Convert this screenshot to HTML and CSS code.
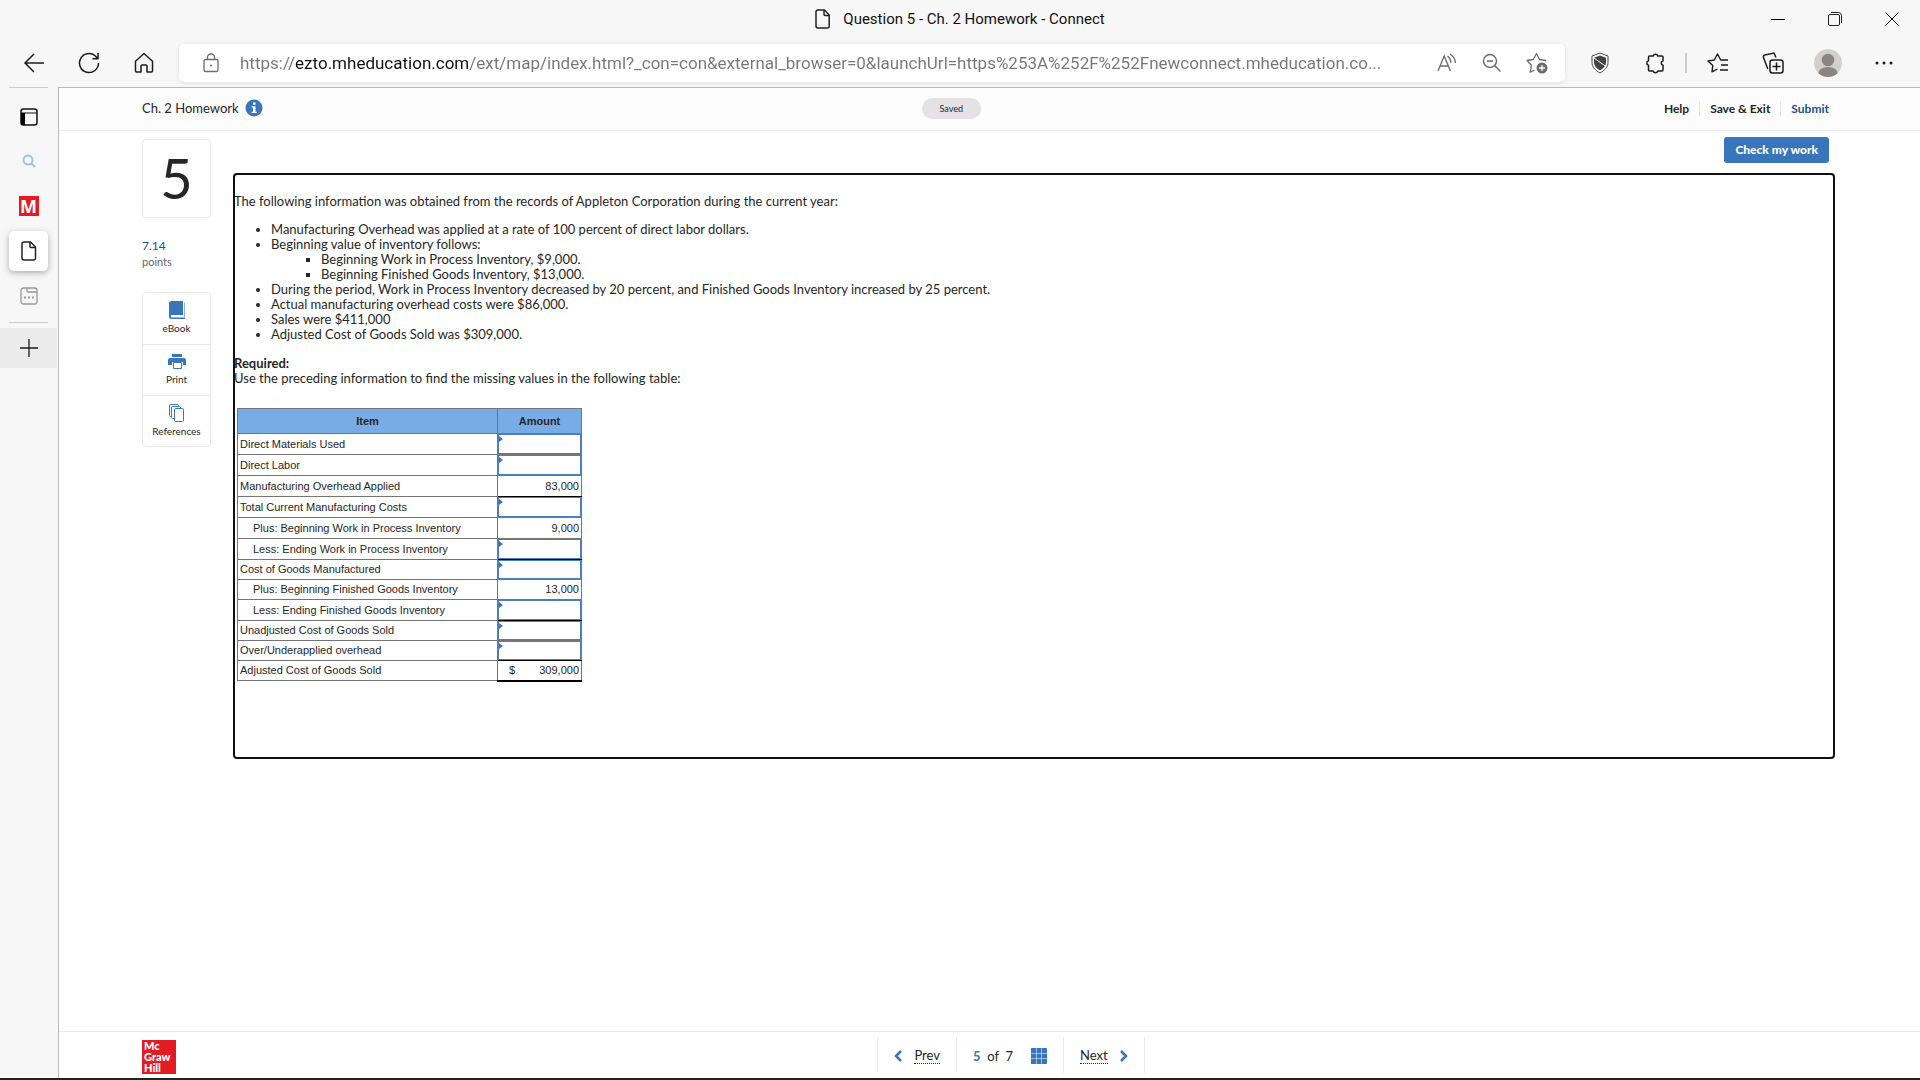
FILE: index.html
```html
<!DOCTYPE html>
<html lang="en">
<head>
<meta charset="utf-8">
<title>Question 5 - Ch. 2 Homework - Connect</title>
<link rel="stylesheet" href="styles.css">
</head>
<body>
<div class="browser">
  <header class="titlebar">
    <div class="window-title">
      <svg width="16" height="20" viewBox="0 0 16 20" fill="none" stroke="#222" stroke-width="1.5"><path d="M3 1h6.500l4.700 5v11a2 2 0 0 1-2 2H3a2 2 0 0 1-2-2V3a2 2 0 0 1 2-2z"/><path d="M9 1v4.500a1 1 0 0 0 1 1h4"/></svg>
      <span>Question 5 - Ch. 2 Homework - Connect</span>
    </div>
    <div class="window-controls">
      <button type="button" aria-label="Minimize"><svg width="14" height="14" stroke="#000"><path d="M0 7.500h14"/></svg></button>
      <button type="button" aria-label="Restore"><svg width="14" height="14" fill="none" stroke="#222"><rect x=".5" y="2.500" width="11" height="11" rx="1.500"/><path d="M3 .5h7.500a3 3 0 0 1 3 3V11"/></svg></button>
      <button type="button" aria-label="Close"><svg width="14" height="14" stroke="#000"><path d="M.5.5l13 13M13.500.5l-13 13"/></svg></button>
    </div>
  </header>

  <div class="toolbar">
    <button type="button" class="tool" aria-label="Back"><svg width="22" height="20" fill="none" stroke="#1b1b1b" stroke-width="1.500"><path d="M21 10H2M11 1L2 10l9 9"/></svg></button>
    <button type="button" class="tool" aria-label="Refresh"><svg width="22" height="22" fill="none" stroke="#1b1b1b" stroke-width="1.500"><path d="M20.500 11a9.500 9.500 0 1 1-3.400-7.200l2.600 2.700M20 1v5.700h-5.500"/></svg></button>
    <button type="button" class="tool" aria-label="Home"><svg width="20" height="22" fill="none" stroke="#1b1b1b" stroke-width="1.500" stroke-linejoin="round"><path d="M1.500 9.200L10 1.500l8.500 7.700V19a1 1 0 0 1-1 1H13v-6a1 1 0 0 0-1-1H8a1 1 0 0 0-1 1v6H2.500a1 1 0 0 1-1-1z"/></svg></button>
    <div class="omnibox">
      <svg class="lock" width="16" height="20" fill="none" stroke="#6b6b6b" stroke-width="1.300"><rect x="1" y="6.500" width="14" height="12" rx="1.500"/><path d="M4.500 6.500V4.500a3.500 3.500 0 0 1 7 0v2"/><circle cx="8" cy="12.500" r="1" fill="#6b6b6b" stroke="none"/></svg>
      <input class="address" type="text" aria-label="Address" value="https://ezto.mheducation.com/ext/map/index.html?_con=con&amp;external_browser=0&amp;launchUrl=https%253A%252F%252Fnewconnect.mheducation.co...">
      <button type="button" aria-label="Read aloud"><svg width="20" height="20" fill="none" stroke="#6b6b6b" stroke-width="1.300"><path d="M1 18L7.200 3 13.400 18M3.100 13h8.200M10.500 3a9 9 0 0 1 3.500 6.500M13 1a12 12 0 0 1 5.500 9"/></svg></button>
      <button type="button" aria-label="Zoom out"><svg width="20" height="20" fill="none" stroke="#6b6b6b" stroke-width="1.400"><circle cx="8" cy="8" r="6.500"/><path d="M5 8h6M12.800 12.800l5.700 5.700"/></svg></button>
      <button type="button" aria-label="Add to favorites"><svg width="22" height="22" fill="none" stroke="#6b6b6b" stroke-width="1.300" stroke-linejoin="round"><path d="M8.500 18L4.200 20.300l1.200-7L1 8.500l6.300-1L10.500 1.500l3 6 6.500 1"/><circle cx="16" cy="16" r="5.500" fill="#6b6b6b" stroke="none"/><path d="M13 16h6M16 13v6" stroke="#fff"/></svg></button>
    </div>
    <div class="toolbar-end">
      <button type="button" class="tool" aria-label="Shield"><svg width="18" height="22" fill="none"><path d="M9 1l8 3v6.500c0 4.500-3.500 8-8 10.500-4.500-2.500-8-6-8-10.500V4z" fill="#fff" stroke="#444"/><path d="M9 3.500l6 2.200v4.800c0 3.300-2.500 6-6 8-3.500-2-6-4.700-6-8V5.700z" fill="#444"/><path d="M3 6l12 8.500" stroke="#fff"/></svg></button>
      <button type="button" class="tool" aria-label="Extensions"><svg width="20" height="22" fill="none" stroke="#1b1b1b" stroke-width="1.500" stroke-linejoin="round"><path d="M4.500 4H8.200a2.400 2.400 0 0 1 4.600 0H17a1 1 0 0 1 1 1v3.700a2.400 2.400 0 0 0 0 4.600V18a1 1 0 0 1-1 1h-4.200a2.400 2.400 0 0 1-4.600 0H4.500a1 1 0 0 1-1-1v-4.700a2.400 2.400 0 0 1 0-4.600V5a1 1 0 0 1 1-1z"/></svg></button>
      <span class="divider"></span>
      <button type="button" class="tool" aria-label="Favorites"><svg width="22" height="20" fill="none" stroke="#1b1b1b" stroke-width="1.400" stroke-linejoin="round"><path d="M10.500 16L5 18.800l.8-6.200L1 8l6.300-1L10.500 1l3.200 6H21M14 12h7M13 17h8"/></svg></button>
      <button type="button" class="tool" aria-label="Collections"><svg width="22" height="22" fill="none" stroke="#1b1b1b" stroke-width="1.500"><rect x="8" y="8" width="13" height="13" rx="2.500"/><path d="M14.500 10.500v8M10.500 14.500h8M5.800 17L1.500 5.500a2 2 0 0 1 1.300-2.600L12 1l2 4.500"/></svg></button>
      <button type="button" class="tool" aria-label="Profile"><svg width="28" height="28"><defs><clipPath id="head"><circle cx="14" cy="14" r="14"/></clipPath></defs><g clip-path="url(#head)"><circle cx="14" cy="14" r="14" fill="#d2d0ce"/><circle cx="14" cy="11" r="6.300" fill="#8a8583"/><ellipse cx="14" cy="25" rx="10" ry="7" fill="#8a8583"/></g></svg></button>
      <button type="button" class="tool" aria-label="Settings and more"><svg width="18" height="4" fill="#1b1b1b"><circle cx="2" cy="2" r="1.500"/><circle cx="9" cy="2" r="1.500"/><circle cx="16" cy="2" r="1.500"/></svg></button>
    </div>
  </div>

  <div class="workspace">
    <aside class="tabs">
      <button type="button" class="tab-menu" aria-label="Tab actions"><svg width="18" height="18"><rect x="1" y="1" width="16" height="16" rx="2.500" fill="none" stroke="#111" stroke-width="1.500"/><path d="M1 5h16" stroke="#111"/><path d="M1 5h4v12H3a2 2 0 0 1-2-2z" fill="#000"/></svg></button>
      <button type="button" class="tab" aria-label="Search tab"><svg width="14" height="14" fill="none" stroke="#9cc3e6" stroke-width="2"><circle cx="6" cy="6" r="4.500"/><path d="M9 9l4 4"/></svg></button>
      <button type="button" class="tab" aria-label="M tab"><span class="m-icon">M</span></button>
      <button type="button" class="tab tab-active" aria-label="Question 5"><svg width="16" height="20" fill="none" stroke="#222" stroke-width="1.500"><path d="M3 1h6.500l5 5v11a2 2 0 0 1-2 2H3a2 2 0 0 1-2-2V3a2 2 0 0 1 2-2z"/><path d="M9 1v4.500a1 1 0 0 0 1 1h4"/></svg></button>
      <button type="button" class="tab" aria-label="Sleeping tab"><svg width="18" height="18" fill="none" stroke="#999"><rect x="1" y="1" width="16" height="16" rx="2.500" stroke-width="1.300"/><path d="M7 1v3a1 1 0 0 0 1 1h9" stroke-width="1.300"/><path d="M4 10.500h2M8 10.500h2M12 10.500h2" stroke-width="2"/></svg></button>
      <button type="button" class="new-tab" aria-label="New tab"><svg width="18" height="18" stroke="#1b1b1b" stroke-width="1.300"><path d="M0 9h18M9 0v18"/></svg></button>
    </aside>

    <div class="page">
      <header class="page-header">
        <div class="assignment">
          <span>Ch. 2 Homework</span>
          <button type="button" aria-label="Assignment information"><svg width="18" height="18"><circle cx="9" cy="9" r="8.500" fill="#3875ba"/><path d="M8 3.500h2.500v2.300H8zM6.500 7.300h4v5.400h1.200v1.300H6.500v-1.300H8V8.600H6.500z" fill="#fff"/></svg></button>
        </div>
        <span class="saved">Saved</span>
        <nav class="page-links">
          <a href="#help">Help</a>
          <a href="#exit">Save &amp; Exit</a>
          <a href="#submit" class="submit">Submit</a>
        </nav>
      </header>

      <main class="content">
        <aside class="question-side">
          <div class="number">5</div>
          <div class="points"><span class="score">7.14</span><span>points</span></div>
          <div class="resources">
            <button type="button"><svg width="16" height="18"><path d="M2.500 0H14v14H2.500a1.500 1.500 0 0 0 0 2.500H16V18H2.500A2.500 2.500 0 0 1 0 15.500v-13A2.500 2.500 0 0 1 2.500 0z" fill="#3875ba"/><path d="M15.500 1.500v15" stroke="#8fb3da"/></svg>eBook</button>
            <button type="button"><svg width="18" height="16"><path d="M4 0h10v3H4zM2 4h14a2 2 0 0 1 2 2v5h-3V8H4v3H0V6a2 2 0 0 1 2-2z" fill="#3875ba"/><path d="M5.500 8.500h8v6h-8z" fill="#fff" stroke="#3875ba"/></svg>Print</button>
            <button type="button"><svg width="16" height="18" fill="#fff" stroke="#3875ba"><rect x=".5" y=".5" width="9" height="12" rx="1"/><rect x="2.500" y="2.500" width="9" height="12" rx="1"/><rect x="5.500" y="4.500" width="9" height="13" rx="1"/></svg>References</button>
          </div>
        </aside>

        <section class="question-main">
          <button type="button" class="check">Check my work</button>
          <article class="question">
            <p>The following information was obtained from the records of Appleton Corporation during the current year:</p>
            <ul>
              <li>Manufacturing Overhead was applied at a rate of 100 percent of direct labor dollars.</li>
              <li>Beginning value of inventory follows:
                <ul>
                  <li>Beginning Work in Process Inventory, $9,000.</li>
                  <li>Beginning Finished Goods Inventory, $13,000.</li>
                </ul>
              </li>
              <li>During the period, Work in Process Inventory decreased by 20 percent, and Finished Goods Inventory increased by 25 percent.</li>
              <li>Actual manufacturing overhead costs were $86,000.</li>
              <li>Sales were $411,000</li>
              <li>Adjusted Cost of Goods Sold was $309,000.</li>
            </ul>
            <p><strong>Required:</strong><br>Use the preceding information to find the missing values in the following table:</p>
            <table class="costs">
              <thead><tr><th scope="col">Item</th><th scope="col" class="amount">Amount</th></tr></thead>
              <tbody>
                <tr><td><label for="dm">Direct Materials Used</label></td><td class="entry"><input id="dm" type="text"></td></tr>
                <tr><td><label for="dl">Direct Labor</label></td><td class="entry"><input id="dl" type="text"></td></tr>
                <tr><td>Manufacturing Overhead Applied</td><td class="value total">83,000</td></tr>
                <tr><td><label for="tc">Total Current Manufacturing Costs</label></td><td class="entry"><input id="tc" type="text"></td></tr>
                <tr><td class="sub">Plus: Beginning Work in Process Inventory</td><td class="value">9,000</td></tr>
                <tr><td class="sub"><label for="ew">Less: Ending Work in Process Inventory</label></td><td class="entry total"><input id="ew" type="text"></td></tr>
                <tr class="compact"><td><label for="cm">Cost of Goods Manufactured</label></td><td class="entry"><input id="cm" type="text"></td></tr>
                <tr class="compact"><td class="sub">Plus: Beginning Finished Goods Inventory</td><td class="value">13,000</td></tr>
                <tr><td class="sub"><label for="ef">Less: Ending Finished Goods Inventory</label></td><td class="entry total"><input id="ef" type="text"></td></tr>
                <tr class="compact"><td><label for="uc">Unadjusted Cost of Goods Sold</label></td><td class="entry"><input id="uc" type="text"></td></tr>
                <tr class="compact"><td><label for="oh">Over/Underapplied overhead</label></td><td class="entry total"><input id="oh" type="text"></td></tr>
                <tr class="compact"><td>Adjusted Cost of Goods Sold</td><td class="value grand"><div class="money"><span>$</span><span>309,000</span></div></td></tr>
              </tbody>
            </table>
          </article>
        </section>
      </main>

      <footer class="page-footer">
        <div class="logo">Mc<br>Graw<br>Hill</div>
        <nav class="pager">
          <a href="#prev"><svg width="8" height="12" fill="none" stroke="#3875ba" stroke-width="2.500"><path d="M7 1L2 6l5 5"/></svg><span class="dotted">Prev</span></a>
          <div class="position"><span><b>5</b>&nbsp; of &nbsp;7</span><button type="button" aria-label="Question list"><svg width="16" height="16" fill="#3875ba"><path d="M0 0h5v5H0zM5.500 0h5v5h-5zM11 0h5v5h-5zM0 5.500h5v5H0zM5.500 5.500h5v5h-5zM11 5.500h5v5h-5zM0 11h5v5H0zM5.500 11h5v5h-5zM11 11h5v5h-5z"/></svg></button></div>
          <a href="#next"><span class="dotted">Next</span><svg width="8" height="12" fill="none" stroke="#3875ba" stroke-width="2.500"><path d="M1 1l5 5-5 5"/></svg></a>
        </nav>
      </footer>
    </div>
  </div>
</div>
</body>
</html>
```
FILE: styles.css
```css
* { box-sizing: border-box; }

body {
  margin: 0;
  font-family: Lato, sans-serif;
  font-size: 13px;
  line-height: 15px;
  color: #262626;
  background: #f7f7f7;
}

button {
  display: flex;
  align-items: center;
  justify-content: center;
  margin: 0;
  padding: 0;
  border: 0;
  background: none;
  font: inherit;
  color: inherit;
}

svg { display: block; flex: none; }
a { color: inherit; text-decoration: none; }

.browser {
  display: flex;
  flex-direction: column;
  min-height: 100vh;
  border-bottom: 2px solid #222;
}

/* Window chrome */
.titlebar {
  display: grid;
  grid-template-columns: 1fr auto 1fr;
  align-items: center;
  height: 38px;
}
.window-title {
  grid-column: 2;
  display: flex;
  align-items: center;
  gap: 12px;
  font: 15px/20px Roboto, sans-serif;
  color: #111;
}
.window-controls {
  display: flex;
  justify-content: flex-end;
}
.window-controls button { width: 57px; height: 36px; }

.toolbar {
  display: flex;
  align-items: center;
  height: 49px;
  padding: 0 8px 0 6px;
}
.tool { width: 55px; height: 40px; }
.toolbar-end {
  display: flex;
  align-items: center;
  margin-left: 7px;
}
.divider {
  width: 2px;
  height: 20px;
  margin: 0 3px;
  background: #ccc;
}
.omnibox {
  flex: 1;
  display: flex;
  align-items: center;
  height: 38px;
  margin-left: 8px;
  padding: 0 6px 0 24px;
  border-radius: 5px;
  background: #fff;
  box-shadow: 0 1px 4px rgba(0, 0, 0, .1);
}
.omnibox button { width: 45px; height: 36px; }
.address {
  flex: 1;
  min-width: 0;
  margin-left: 21px;
  padding: 0;
  border: 0;
  outline: 0;
  font: 17px/24px Roboto, sans-serif;
  color: transparent;
  background: linear-gradient(to right, #767676 55px, #111 55px, #111 229px, #767676 229px);
  -webkit-background-clip: text;
  background-clip: text;
}

.toolbar-end .tool:last-child { width: 57px; }

.workspace {
  flex: 1;
  display: flex;
}

.tabs {
  display: flex;
  flex-direction: column;
  align-items: center;
  gap: 5px;
  width: 58px;
  padding-right: 1px;
}
.tabs::before {
  content: "";
  width: 39px;
  height: 1px;
  margin-bottom: 5px;
  background: #ccc;
}
.tab-menu { width: 39px; height: 38px; }
.tab {
  width: 39px;
  height: 40px;
  border-radius: 5px;
}
.tab-active {
  background: #fff;
  box-shadow: 0 2px 6px rgba(0, 0, 0, .3);
}
.m-icon {
  width: 20px;
  height: 20px;
  background: #e31b23;
  color: #fff;
  font: bold 18px/20px "Open Sans", sans-serif;
  text-align: center;
}
.new-tab {
  position: relative;
  width: 100%;
  height: 40px;
  margin-top: 7px;
  background: #ebebeb;
}
.new-tab::before {
  content: "";
  position: absolute;
  top: -6px;
  left: 9px;
  right: 9px;
  height: 1px;
  background: #ccc;
}

/* Assignment page */
.page {
  flex: 1;
  display: flex;
  flex-direction: column;
  min-width: 0;
  border-top: 1px solid #b8b8b8;
  border-left: 1px solid #b8b8b8;
  background: #fff;
}
.page-header {
  display: flex;
  align-items: center;
  justify-content: space-between;
  height: 43px;
  padding: 0 91px 2px 83px;
  border-bottom: 1px solid #ebebeb;
  background: #fcfcfc;
}
.assignment {
  display: flex;
  align-items: center;
  gap: 6px;
}
.saved {
  width: 59px;
  border-radius: 11px;
  background: #e4e2e5;
  font-size: 9px;
  line-height: 21px;
  text-align: center;
}
.page-links {
  display: flex;
  padding-left: 24px;
  font-size: 12px;
  font-weight: bold;
}
.page-links a + a {
  margin-left: 10px;
  padding-left: 10px;
  border-left: 1px solid #e6e6e6;
}
.page-links .submit { color: #1d4f91; }

.content {
  flex: 1;
  display: flex;
  align-items: flex-start;
  gap: 22px;
  padding: 6px 85px 24px 83px;
}
.question-side {
  width: 69px;
  margin-top: 2px;
}
.number {
  height: 79px;
  border: 1px solid #e8e8e8;
  border-radius: 4px;
  font-size: 56px;
  line-height: 75px;
  text-align: center;
}
.points {
  display: flex;
  flex-direction: column;
  margin: 20px 0 23px;
  font-size: 11px;
  line-height: 15px;
  color: #666;
}
.score {
  font-size: 12px;
  line-height: 16px;
  color: #1d4f91;
}
.resources {
  border: 1px solid #e8e8e8;
  border-radius: 4px;
}
.resources button {
  flex-direction: column;
  gap: 2px;
  width: 100%;
  height: 51px;
  font-size: 10px;
}
.resources button + button { border-top: 1px solid #e8e8e8; }

.question-main {
  flex: 1;
  display: flex;
  flex-direction: column;
  min-width: 0;
}
.check {
  align-self: flex-end;
  height: 26px;
  margin: 0 6px 10px 0;
  padding: 0 11px 2px;
  border-radius: 3px;
  background: #3875ba;
  color: #fff;
  font-size: 12px;
  font-weight: 900;
}
.question {
  min-height: 586px;
  padding: 21px 4px 24px 1px;
  border-radius: 4px;
  outline: 2px solid #111;
  outline-offset: -2px;
}
.question p { margin: 0 0 13px; }
.question ul {
  margin: 0 0 14px;
  padding-left: 37px;
}
.question ul ul {
  margin: 0;
  padding-left: 50px;
  list-style: square;
}

.costs {
  width: 345px;
  margin: 22px 0 0 3px;
  border-collapse: collapse;
  font: 11px/13px "Liberation Sans", Arial, sans-serif;
}
.costs th,
.costs td {
  height: 21px;
  padding: 0 2px;
  border: 1px solid #757575;
}
.costs th {
  height: 25px;
  background: #78ace6;
}
.costs .amount { width: 84px; }
.costs .sub { padding-left: 15px; }
.costs .value { text-align: right; }
.costs .total { border-bottom: 1px solid #000; }
.costs .grand { border-bottom: 2px solid #000; }
.costs .compact td { height: 20px; }
.costs .entry {
  position: relative;
  padding: 0;
}
.costs input {
  display: block;
  width: 100%;
  height: 20px;
  border: 1px solid #4a80c0;
  padding: 0 3px;
  background: #fff;
  font: inherit;
  text-align: right;
}
.costs .compact input { height: 19px; }
.entry::before {
  content: "";
  position: absolute;
  top: 2px;
  left: 1px;
  border: 3px solid transparent;
  border-left: 4px solid #3875ba;
  border-right: 0;
}
.money {
  display: flex;
  justify-content: space-between;
  padding-left: 9px;
}

.page-footer {
  display: grid;
  grid-template-columns: 1fr auto 1fr;
  align-items: center;
  height: 47px;
  padding: 0 40px 0 83px;
  border-top: 1px solid #ebebeb;
}
.logo {
  width: 34px;
  height: 34px;
  padding: 0 2px;
  margin-top: 4px;
  background: #e31b23;
  color: #fff;
  font-size: 11px;
  font-weight: 900;
  line-height: 11px;
}
.pager {
  display: flex;
  height: 36px;
  border-right: 1px solid #ebebeb;
  font-size: 13px;
}
.pager > * {
  display: flex;
  align-items: center;
  gap: 12px;
  padding: 2px 16px 0;
  border-left: 1px solid #ebebeb;
}
.position { gap: 18px; }
.position b { color: #3875ba; }
.dotted { border-bottom: 1px dotted #262626; }
```
